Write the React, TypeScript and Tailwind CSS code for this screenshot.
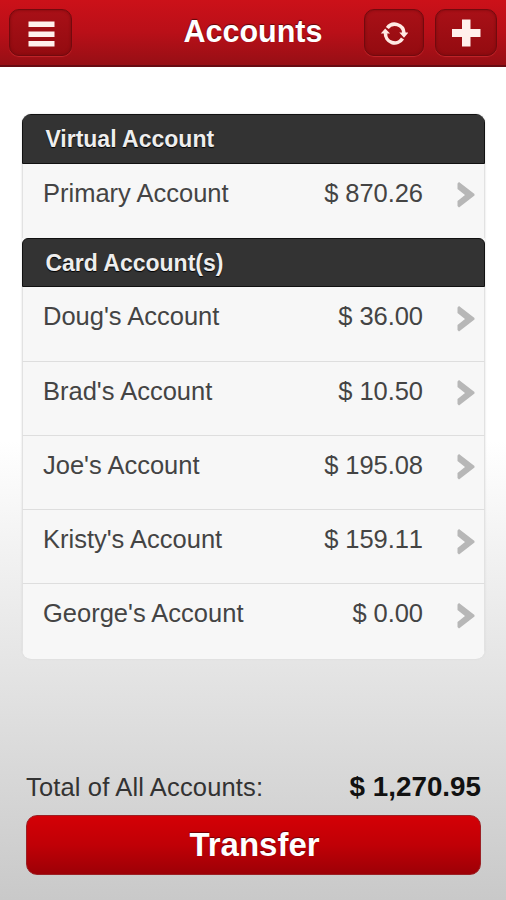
import clsx from "clsx";

type Account = { name: string; balance: string };

const virtualAccounts: Account[] = [{ name: "Primary Account", balance: "$ 870.26" }];

const cardAccounts: Account[] = [
  { name: "Doug's Account", balance: "$ 36.00" },
  { name: "Brad's Account", balance: "$ 10.50" },
  { name: "Joe's Account", balance: "$ 195.08" },
  { name: "Kristy's Account", balance: "$ 159.11" },
  { name: "George's Account", balance: "$ 0.00" },
];

function HeaderButton({ label, className, children }: { label: string; className?: string; children: React.ReactNode }) {
  return (
    <button
      type="button"
      aria-label={label}
      className={clsx(
        "flex h-[47px] items-center justify-center rounded-[10px] border border-[#720a0e] bg-linear-to-b from-[#a91017] to-[#930b10] shadow-[inset_0_0_3px_#780a0e,0_1px_1px_#c3262b]",
        className,
      )}
    >
      {children}
    </button>
  );
}

function SectionTitle({ children }: { children: React.ReactNode }) {
  return (
    <h2 className="h-[49.5px] rounded-t-[6px] border border-[#111] bg-[#333] pl-[22px] text-[23px] leading-[48px] font-bold text-[#eee] [text-shadow:0_1px_1px_#000]">
      {children}
    </h2>
  );
}

function AccountRow({ account, divider }: { account: Account; divider: boolean }) {
  return (
    <li
      className={clsx(
        "flex h-[74.3px] border-x border-x-[#e2e2e2] pr-[9px] pl-[19.6px] text-[25.5px] leading-[59px] text-[#444]",
        divider && "border-b border-b-[#dedede]",
      )}
    >
      <span className="grow">{account.name}</span>
      <span className="tracking-[-0.05px] [font-kerning:none]">{account.balance}</span>
      <svg className="mt-[17.5px] ml-[33px] shrink-0" width="19" height="28" viewBox="0 0 19 28">
        <path d="M3 1 18.500 13v1.500L3 26.500 1.500 25v-5L9 14 1.500 8V2.500z" fill="#b7b7b7" />
      </svg>
    </li>
  );
}

function AccountSection({ title, accounts }: { title: string; accounts: Account[] }) {
  return (
    <section>
      <SectionTitle>{title}</SectionTitle>
      <ul>
        {accounts.map((account, i) => (
          <AccountRow key={account.name} account={account} divider={i < accounts.length - 1} />
        ))}
      </ul>
    </section>
  );
}

export default function App() {
  return (
    <div className="flex h-[900px] w-[506px] flex-col overflow-hidden bg-[linear-gradient(#fff_0%,#fff_49%,#c9c9c9_100%)] font-['Liberation_Sans',Arial,sans-serif]">
      <header className="grid h-[67px] shrink-0 grid-cols-[1fr_auto_1fr] border-b-2 border-[#680b12] bg-linear-to-b from-[#cc1119] via-[#b90f18] to-[#960f15] px-[9px] pt-[9px]">
        <HeaderButton label="Menu" className="w-[63px]">
          <svg width="28" height="28" viewBox="0 0 28 28" fill="#fff0ec">
            <path d="M1.500 2.500h26V8h-26zM1.500 12.500h26V18h-26zM1.500 22h26v5.500h-26z" />
          </svg>
        </HeaderButton>
        <h1 className="text-[30.5px] leading-[44px] font-bold text-white [text-shadow:0_-1px_1px_#5b080c]">Accounts</h1>
        <div className="flex justify-end gap-[11px]">
          <HeaderButton label="Refresh" className="w-[60px]">
            <svg width="28" height="28" viewBox="0 0 28 28" fill="none" stroke="#ffe9e3" strokeWidth="3.6">
              <path d="M7.300 9A9.200 9.200 0 0 1 23.900 14" />
              <path d="M22.500 19.500A9.200 9.200 0 0 1 5.500 14" />
              <path d="M.8 14.500 5.200 9.500l4.800 5zM19.300 13.500H28.500L24 18.800z" fill="#ffe9e3" stroke="none" />
            </svg>
          </HeaderButton>
          <HeaderButton label="Add account" className="w-[62px]">
            <svg width="30" height="28" viewBox="0 0 30 28" fill="#fff0ec">
              <path d="M11 .5h8.500v9.500h10v8h-10v9.500H11V18H1v-8h10z" />
            </svg>
          </HeaderButton>
        </div>
      </header>

      <main className="mt-[47px] mr-[21px] ml-[22.4px] overflow-hidden rounded-[9px] bg-[#f7f7f7] shadow-[0_0_2px_#d5d5d5]">
        <AccountSection title="Virtual Account" accounts={virtualAccounts} />
        <AccountSection title="Card Account(s)" accounts={cardAccounts} />
      </main>

      <footer className="mt-auto pr-[25px] pb-[25px] pl-[26px]">
        <div className="flex items-center justify-between leading-[40px] text-[#333]">
          <span className="text-[25.5px] tracking-[0.15px]">Total of All Accounts:</span>
          <strong className="text-[27.8px] text-[#111]">$ 1,270.95</strong>
        </div>
        <button
          type="button"
          className="mt-[8px] h-[60px] w-full rounded-[11px] border border-[#9b2024] bg-linear-to-b from-[#d40006] via-[#c00006] to-[#9d0006] pl-[2px] text-[33px] leading-[58px] font-bold text-white [text-shadow:0_-1px_1px_#6b0008]"
        >
          Transfer
        </button>
      </footer>
    </div>
  );
}
